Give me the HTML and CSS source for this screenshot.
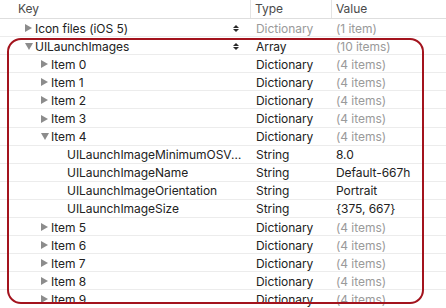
FILE: index.html
```html
<!doctype html>
<html lang="en">
  <head>
    <meta charset="UTF-8" />
    <title>Info.plist</title>
    <link rel="stylesheet" href="styles.css">
  </head>
  <body>
    <div class="plist">
      <div class="head">
        <span class="col key">Key</span>
        <span class="col type">Type</span>
        <span class="col value">Value</span>
      </div>
      <div class="row dim">
        <span class="key lv1"><i class="tri"></i>Icon files (iOS 5)<b class="step"></b></span>
        <span class="type">Dictionary</span>
        <span class="value">(1 item)</span>
      </div>
      <div class="row">
        <span class="key lv1"><i class="tri open"></i>UILaunchImages<b class="step"></b></span>
        <span class="type">Array</span>
        <span class="value muted">(10 items)</span>
      </div>
      <div class="row">
        <span class="key lv2"><i class="tri"></i>Item 0</span>
        <span class="type">Dictionary</span>
        <span class="value muted">(4 items)</span>
      </div>
      <div class="row">
        <span class="key lv2"><i class="tri"></i>Item 1</span>
        <span class="type">Dictionary</span>
        <span class="value muted">(4 items)</span>
      </div>
      <div class="row">
        <span class="key lv2"><i class="tri"></i>Item 2</span>
        <span class="type">Dictionary</span>
        <span class="value muted">(4 items)</span>
      </div>
      <div class="row">
        <span class="key lv2"><i class="tri"></i>Item 3</span>
        <span class="type">Dictionary</span>
        <span class="value muted">(4 items)</span>
      </div>
      <div class="row">
        <span class="key lv2"><i class="tri open"></i>Item 4</span>
        <span class="type">Dictionary</span>
        <span class="value muted">(4 items)</span>
      </div>
      <div class="row">
        <span class="key lv3"><em>UILaunchImageMinimumOSVersion</em></span>
        <span class="type">String</span>
        <span class="value">8.0</span>
      </div>
      <div class="row">
        <span class="key lv3"><em>UILaunchImageName</em></span>
        <span class="type">String</span>
        <span class="value">Default-667h</span>
      </div>
      <div class="row">
        <span class="key lv3"><em>UILaunchImageOrientation</em></span>
        <span class="type">String</span>
        <span class="value">Portrait</span>
      </div>
      <div class="row">
        <span class="key lv3"><em>UILaunchImageSize</em></span>
        <span class="type">String</span>
        <span class="value">{375, 667}</span>
      </div>
      <div class="row">
        <span class="key lv2"><i class="tri"></i>Item 5</span>
        <span class="type">Dictionary</span>
        <span class="value muted">(4 items)</span>
      </div>
      <div class="row">
        <span class="key lv2"><i class="tri"></i>Item 6</span>
        <span class="type">Dictionary</span>
        <span class="value muted">(4 items)</span>
      </div>
      <div class="row">
        <span class="key lv2"><i class="tri"></i>Item 7</span>
        <span class="type">Dictionary</span>
        <span class="value muted">(4 items)</span>
      </div>
      <div class="row">
        <span class="key lv2"><i class="tri"></i>Item 8</span>
        <span class="type">Dictionary</span>
        <span class="value muted">(4 items)</span>
      </div>
      <div class="row">
        <span class="key lv2"><i class="tri"></i>Item 9</span>
        <span class="type">Dictionary</span>
        <span class="value muted">(4 items)</span>
      </div>
      <!-- annotation drawn over the table -->
      <div class="mark"></div>
    </div>
  </body>
</html>
```

FILE: styles.css
```css
* {
  margin: 0;
  padding: 0;
  box-sizing: border-box;
}
body {
  background: #fff;
  color: #222;
  font-family: Inter, "Liberation Sans", sans-serif;
  font-size: 12px;
  letter-spacing: -0.05px;
  width: 446px;
  height: 308px;
  overflow: hidden;
}
.plist {
  position: relative;
  width: 446px;
}
.head,
.row {
  display: grid;
  grid-template-columns: 250px 81px 1fr;
  align-items: center;
}
.head {
  height: 19px;
  border-bottom: 1px solid #dedede;
  color: #4a4a4a;
}
.head .col {
  padding-left: 4px;
  line-height: 18px;
}
.head .key {
  padding-left: 18px;
}
.head .type,
.head .value {
  border-left: 1px solid #e4e4e4;
}
.row {
  height: 18.1px;
  border-bottom: 1px solid #ececec;
  padding-top: 1px;
}
.row .key {
  display: flex;
  align-items: center;
  white-space: nowrap;
  overflow: hidden;
  padding-right: 2px;
}
.row .key em {
  font-style: normal;
  overflow: hidden;
  text-overflow: ellipsis;
}
.row .type {
  padding-left: 6px;
}
.row .value {
  padding-left: 5px;
}
.lv1 { padding-left: 25px; }
.lv2 { padding-left: 41px; }
.lv3 { padding-left: 67px; }
.tri {
  width: 0;
  height: 0;
  margin-right: 3px;
  border-top: 4px solid transparent;
  border-bottom: 4px solid transparent;
  border-left: 7px solid #8c8c8c;
}
.tri.open {
  border-left: 4px solid transparent;
  border-right: 4px solid transparent;
  border-top: 7px solid #8c8c8c;
  border-bottom: 0;
  margin-right: 2px;
}
.step {
  margin-left: auto;
  margin-right: 9px;
  display: flex;
  flex-direction: column;
  gap: 1px;
}
.step::before,
.step::after {
  content: "";
  border-left: 3px solid transparent;
  border-right: 3px solid transparent;
}
.step::before {
  border-bottom: 3px solid #2a2a2a;
}
.step::after {
  border-top: 3px solid #2a2a2a;
}
.dim .type,
.dim .value,
.muted {
  color: #9a9a9a;
}
.mark {
  position: absolute;
  left: 7px;
  top: 38px;
  width: 417px;
  height: 266px;
  border: 2px solid #a3131d;
  border-radius: 14px;
  pointer-events: none;
}
```
